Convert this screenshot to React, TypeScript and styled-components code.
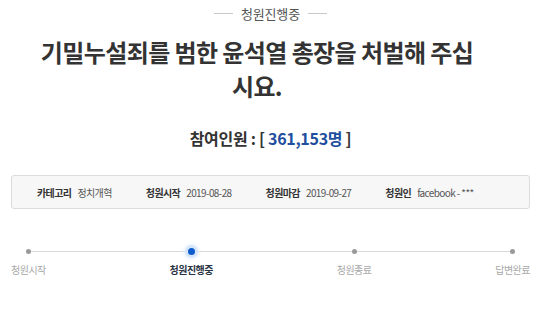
import styled, { createGlobalStyle } from 'styled-components';

const GlobalStyle = createGlobalStyle`
  html, body {
    margin: 0;
    padding: 0;
    background: #fff;
  }
  body {
    font-family: "Noto Sans CJK KR", "Noto Sans", sans-serif;
    color: #333;
  }
`;

const Page = styled.div`
  width: 550px;
  height: 321px;
  overflow: hidden;
  padding: 0 20px 0 11px;
  box-sizing: border-box;
`;

const StatusLabel = styled.div`
  display: flex;
  justify-content: center;
  align-items: center;
  gap: 8px;
  height: 26px;
  font-size: 13px;
  color: #555;
  letter-spacing: -0.2px;

  &::before,
  &::after {
    content: '';
    width: 19px;
    height: 1px;
    background: #c8c8c8;
  }
`;

const Title = styled.h1`
  margin: 9px 50px 0 23px;
  font-size: 24px;
  line-height: 34px;
  font-weight: 700;
  letter-spacing: -0.6px;
  text-align: center;
  color: #333;
`;

const Count = styled.div`
  margin-top: 25px;
  text-align: center;
  font-size: 16px;
  line-height: 20px;
  font-weight: 700;
  color: #333;
  letter-spacing: -0.3px;
`;

const CountNumber = styled.span`
  color: #1f4f9e;
`;

const InfoBox = styled.div`
  margin-top: 27px;
  height: 34px;
  box-sizing: border-box;
  border: 1px solid #dcdcdc;
  border-radius: 3px;
  background: #f7f7f7;
  display: flex;
  align-items: center;
  gap: 34px;
  padding-left: 25px;
`;

const InfoItem = styled.div`
  display: flex;
  align-items: center;
  gap: 6px;
  font-size: 10px;
  letter-spacing: -0.6px;
`;

const InfoLabel = styled.span`
  font-weight: 700;
  color: #333;
`;

const InfoValue = styled.span`
  color: #555;
`;

const Track = styled.div`
  position: relative;
  margin-top: 34px;
  display: flex;
  justify-content: space-between;

  &::before {
    content: '';
    position: absolute;
    top: 8px;
    left: 17px;
    right: 18px;
    height: 1px;
    background: #d9d9d9;
  }
`;

const Step = styled.div`
  position: relative;
  display: flex;
  flex-direction: column;
  align-items: center;
`;

const DotRow = styled.div`
  height: 16px;
  display: flex;
  align-items: center;
  justify-content: center;
`;

const Dot = styled.span<{ $active?: boolean }>`
  width: ${(p) => (p.$active ? '7px' : '5px')};
  height: ${(p) => (p.$active ? '7px' : '5px')};
  border-radius: 50%;
  background: ${(p) => (p.$active ? '#0d5ccc' : '#999')};
  box-shadow: ${(p) => (p.$active ? '0 0 0 3px #d6e5fa, 0 0 4px 4px #e6effc' : 'none')};
`;

const StepLabel = styled.span<{ $active?: boolean }>`
  margin-top: 4px;
  font-size: 10px;
  line-height: 14px;
  letter-spacing: -0.5px;
  font-weight: ${(p) => (p.$active ? 700 : 400)};
  color: ${(p) => (p.$active ? '#2b3445' : '#a8a8a8')};
`;

const info = [
  { label: '카테고리', value: '정치개혁' },
  { label: '청원시작', value: '2019-08-28' },
  { label: '청원마감', value: '2019-09-27' },
  { label: '청원인', value: 'facebook - ***' },
];

const steps = [
  { name: '청원시작', active: false },
  { name: '청원진행중', active: true },
  { name: '청원종료', active: false },
  { name: '답변완료', active: false },
];

export default function App() {
  return (
    <>
      <GlobalStyle />
      <Page>
        <StatusLabel>청원진행중</StatusLabel>
        <Title>기밀누설죄를 범한 윤석열 총장을 처벌해 주십시요.</Title>
        <Count>
          참여인원 : [ <CountNumber>361,153명</CountNumber> ]
        </Count>
        <InfoBox>
          {info.map((item) => (
            <InfoItem key={item.label}>
              <InfoLabel>{item.label}</InfoLabel>
              <InfoValue>{item.value}</InfoValue>
            </InfoItem>
          ))}
        </InfoBox>
        <Track>
          {steps.map((s) => (
            <Step key={s.name}>
              <DotRow>
                <Dot $active={s.active} />
              </DotRow>
              <StepLabel $active={s.active}>{s.name}</StepLabel>
            </Step>
          ))}
        </Track>
      </Page>
    </>
  );
}
